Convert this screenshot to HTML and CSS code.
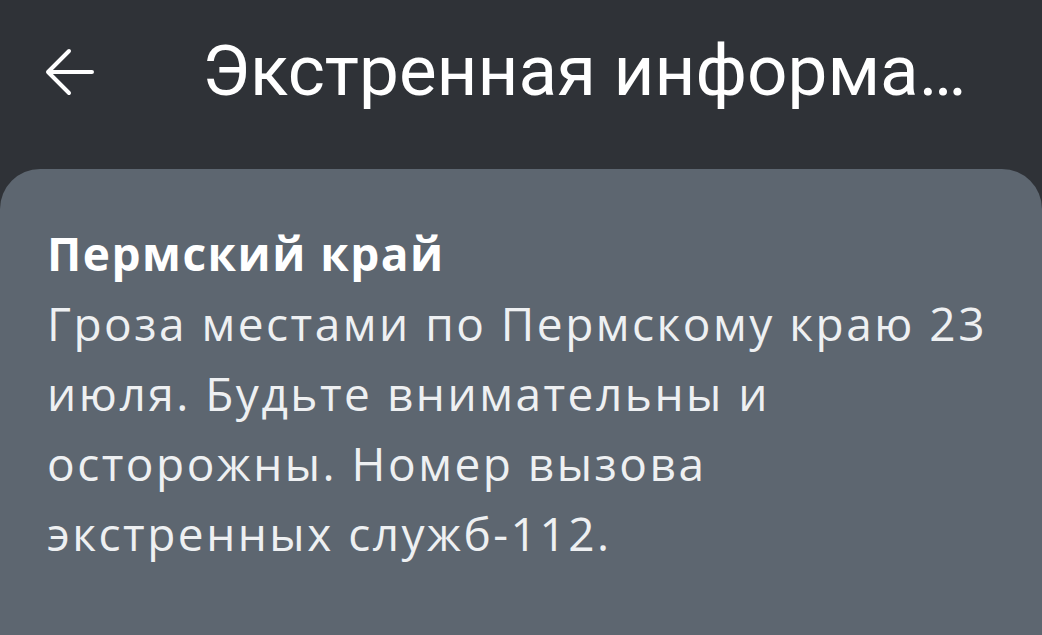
FILE: index.html
```html
<!DOCTYPE html>
<html lang="ru">
<head>
    <meta charset="UTF-8">
    <meta name="viewport" content="width=device-width, initial-scale=1.0">
    <title>Экстренная информация</title>
    <link rel="stylesheet" href="styles.css">
</head>
<body>
    <div class="topbar">
        <a href="#" class="back" aria-label="Назад">
            <svg width="50" height="48" viewBox="0 0 50 48">
                <path d="M48 24 H4 M25 3 L4 24 L25 45" fill="none" stroke="#fff" stroke-width="4" stroke-linecap="round" stroke-linejoin="round"/>
            </svg>
        </a>
        <h1 class="title">Экстренная информация</h1>
    </div>
    <div class="alert-card">
        <h2 class="region">Пермский край</h2>
        <p class="message">Гроза местами по Пермскому краю 23 июля. Будьте внимательны и осторожны. Номер вызова экстренных служб-112.</p>
    </div>
</body>
</html>
```

FILE: styles.css
```css
body {
    margin: 0;
    background-color: #2f3237;
    font-family: "Open Sans", "Noto Sans", sans-serif;
    color: #fff;
    height: 635px;
    overflow: hidden;
}
.topbar {
    height: 169px;
    box-sizing: border-box;
    padding: 31px 70px 0 44px;
    display: flex;
    align-items: flex-start;
    gap: 108px;
}
.back {
    display: flex;
    align-items: center;
    height: 82px;
}
.title {
    margin: 0;
    font-family: Roboto, sans-serif;
    font-weight: 400;
    font-size: 71px;
    line-height: 80px;
    white-space: nowrap;
    overflow: hidden;
    text-overflow: ellipsis;
    min-width: 0;
}
.alert-card {
    background-color: #5d6670;
    border-radius: 40px 40px 0 0;
    height: 466px;
    box-sizing: border-box;
    padding: 49px 47px 0 47px;
}
.region {
    margin: 0;
    font-size: 46px;
    font-weight: 700;
    line-height: 70px;
    letter-spacing: 1.5px;
}
.message {
    margin: 0;
    font-size: 46px;
    line-height: 70px;
    letter-spacing: 2.5px;
    color: #eef0f2;
}
```
